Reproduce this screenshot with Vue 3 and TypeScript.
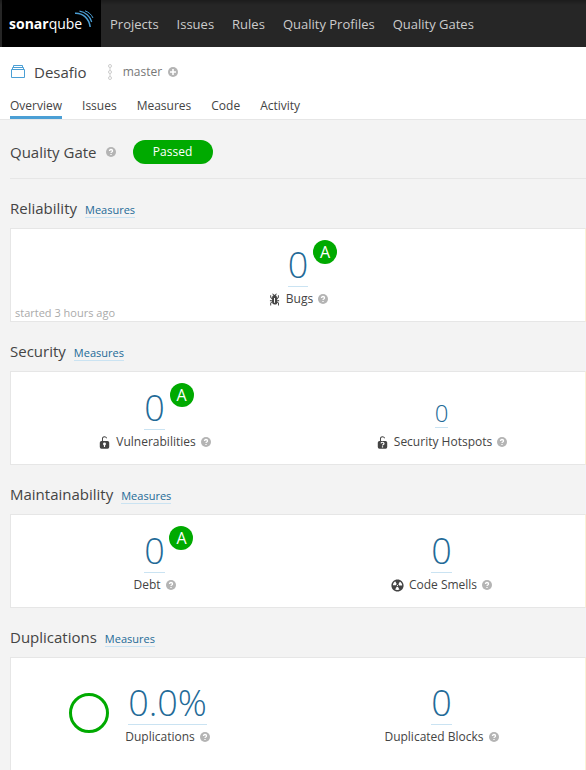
<script setup lang="ts">
type IconName = 'bug' | 'lock' | 'hotspot' | 'smell'

interface Measure {
  value: string
  label: string
  icon?: IconName
  rating?: string
  small?: boolean
  ring?: boolean
}

interface Domain {
  title: string
  note?: string
  measures: Measure[]
}

const mainNav: string[] = ['Projects', 'Issues', 'Rules', 'Quality Profiles', 'Quality Gates']
const tabs: string[] = ['Overview', 'Issues', 'Measures', 'Code', 'Activity']

const domains: Domain[] = [
  {
    title: 'Reliability',
    note: 'started 3 hours ago',
    measures: [{ value: '0', label: 'Bugs', icon: 'bug', rating: 'A' }],
  },
  {
    title: 'Security',
    measures: [
      { value: '0', label: 'Vulnerabilities', icon: 'lock', rating: 'A' },
      { value: '0', label: 'Security Hotspots', icon: 'hotspot', small: true },
    ],
  },
  {
    title: 'Maintainability',
    measures: [
      { value: '0', label: 'Debt', rating: 'A' },
      { value: '0', label: 'Code Smells', icon: 'smell' },
    ],
  },
  {
    title: 'Duplications',
    measures: [
      { value: '0.0%', label: 'Duplications', ring: true },
      { value: '0', label: 'Duplicated Blocks' },
    ],
  },
]
</script>

<template>
  <div class="page">
    <header class="topbar">
      <a class="logo" href="#" aria-label="sonarqube">
        <span class="logo-text"><b>sonar</b>qube</span>
        <svg class="waves" viewBox="0 0 20 20" aria-hidden="true">
          <path d="M1 3.2C8.500 2.800 15 8 16.200 17" stroke-width="1.500" />
          <path d="M5.500 1.200C11 1.800 16.500 6.500 17.700 12" stroke-width="1.200" />
          <path d="M11 .8C14.500 2 17.500 4.500 19 8" stroke-width="1" />
        </svg>
      </a>
      <nav class="main-nav">
        <a v-for="item in mainNav" :key="item" href="#">{{ item }}</a>
      </nav>
    </header>

    <div class="project">
      <div class="project-line">
        <svg class="project-icon" viewBox="0 0 16 16" aria-hidden="true">
          <path d="M1.500 5.500h13v8h-13zM2.500 5.500v-2h11v2M3.500 3.500v-2h9v2" />
        </svg>
        <h1>Desafio</h1>
        <svg class="branch-icon" viewBox="0 0 6 16" aria-hidden="true">
          <circle cx="3" cy="2" r="1.500" />
          <circle cx="3" cy="8" r="1.500" />
          <circle cx="3" cy="14" r="1.500" />
          <path d="M3 3.500v3M3 9.500v3" />
        </svg>
        <span class="branch">master</span>
        <button class="plus" type="button" aria-label="Add">
          <svg viewBox="0 0 10 10" aria-hidden="true">
            <circle cx="5" cy="5" r="5" fill="#b4b4b4" />
            <path d="M5 2v6M2 5h6" stroke="#fff" stroke-width="1.600" />
          </svg>
        </button>
      </div>
      <nav class="tabs">
        <a v-for="(tab, i) in tabs" :key="tab" href="#" :class="{ active: i === 0 }">{{ tab }}</a>
      </nav>
    </div>

    <main>
      <div class="gate">
        <h2>Quality Gate</h2>
        <svg class="help" viewBox="0 0 10 10" aria-hidden="true">
          <circle cx="5" cy="5" r="5" />
          <path d="M3.500 4Q3.500 2.500 5 2.500T6.500 3.900Q6.500 4.600 5.700 5Q5 5.300 5 6M5 6.900v1.200" />
        </svg>
        <span class="status">Passed</span>
      </div>

      <section v-for="domain in domains" :key="domain.title" class="domain">
        <div class="domain-head">
          <h2>{{ domain.title }}</h2>
          <a href="#">Measures</a>
        </div>
        <div class="card">
          <div
            v-for="m in domain.measures"
            :key="m.label"
            class="measure"
            :class="{ 'with-ring': m.ring }"
          >
            <span v-if="m.ring" class="ring"></span>
            <div class="measure-body">
              <div class="value-box">
                <div class="value-wrap">
                  <a class="value" :class="{ small: m.small }" href="#">{{ m.value }}</a>
                  <span v-if="m.rating" class="rating">{{ m.rating }}</span>
                </div>
              </div>
              <div class="label">
                <svg v-if="m.icon" class="metric-icon" viewBox="0 0 16 16" aria-hidden="true">
                  <path
                    v-if="m.icon === 'bug'"
                    transform="matrix(1.180 0 0 1.150 -2 -.7)"
                    d="M11 9h1.300l.5.8.8-.5-.8-1.300H11v-.3l2-2.300V3h-1v2l-1 1.200V5c-.1-.8-.7-1.500-1.400-1.900L11 1.800l-.7-.7-1.800 1.600-1.800-1.600-.7.7 1.500 1.300C6.700 3.500 6.100 4.200 6 5v1.100L5 5V3H4v2.300l2 2.300V8H4.200l-.7 1.200.8.5.4-.7H6v.3l-2 1.900V14h1v-2.400l1-1C6 12 7.100 13 8.400 13h.8c.7 0 1.400-.3 1.800-.9.3-.4.3-.9.2-1.400l.9.900V14h1v-2.800l-2-1.900V9zm-2 2H8V6h1v5z"
                  />
                  <g v-else-if="m.icon === 'lock' || m.icon === 'hotspot'">
                    <path
                      d="M11.800 6H6.100V3.900a2.100 2.100 0 0 1 2-2.500 2.220 2.220 0 0 1 1.900 1.200.48.48 0 0 0 .8.2.48.48 0 0 0 .2-.7A3.200 3.200 0 0 0 8.100.2a3.340 3.340 0 0 0-3.200 3.600V6H4.200A2.100 2.100 0 0 0 2.200 8v5.600a2.100 2.100 0 0 0 2 2.100h7.600a2.100 2.100 0 0 0 2-2.100V8a2.100 2.100 0 0 0-2-2z"
                    />
                    <path
                      v-if="m.icon === 'lock'"
                      fill="#fff"
                      d="M8.700 11.600v2H7.300v-2a1.800 1.800 0 0 1-1.100-1.700 1.800 1.800 0 0 1 3.600 0 1.800 1.800 0 0 1-1.100 1.700z"
                    />
                    <path
                      v-else
                      class="mark"
                      d="M6.200 9.100Q6.300 7.700 8 7.700T9.800 9.100Q9.800 9.900 8.900 10.400Q8 10.900 8 11.600M8 12.600v1.500"
                    />
                  </g>
                  <path
                    v-else
                    transform="matrix(1.250 0 0 1.250 -2 -2)"
                    d="M8 2C4.700 2 2 4.700 2 8s2.700 6 6 6 6-2.700 6-6-2.700-6-6-6zm-.5 5.500h.9v.9h-.9v-.9zm-3.800.2c-.1 0-.2-.1-.2-.2 0-.4.1-1.200.6-2S5.300 4.200 5.600 4c.2 0 .3 0 .3.1l1.300 2.300c0 .1 0 .2-.1.2-.1.2-.2.3-.3.5-.1.2-.2.4-.2.5 0 .1-.1.2-.2.2l-2.700-.1zM9.900 12c-.3.2-1.100.5-2 .5-.9 0-1.700-.3-2-.5-.1 0-.1-.2-.1-.3l1.300-2.300c0-.1.1-.1.2-.1.2.1.3.1.5.1s.4 0 .5-.1c.1 0 .2 0 .2.1l1.300 2.300c.2.2.2.3.1.3zm2.500-4.100L9.700 8c-.1 0-.2-.1-.2-.2 0-.2-.1-.4-.2-.5 0-.1-.2-.3-.3-.4-.1 0-.1-.1-.1-.2l1.300-2.300c.1-.1.2-.1.3-.1.3.2 1 .7 1.500 1.500s.6 1.600.6 2c0 0-.1.1-.2.1z"
                  />
                </svg>
                <span>{{ m.label }}</span>
                <svg class="help" viewBox="0 0 10 10" aria-hidden="true">
                  <circle cx="5" cy="5" r="5" />
                  <path d="M3.500 4Q3.500 2.500 5 2.500T6.500 3.900Q6.500 4.600 5.700 5Q5 5.300 5 6M5 6.900v1.200" />
                </svg>
              </div>
            </div>
          </div>
          <span v-if="domain.note" class="note">{{ domain.note }}</span>
        </div>
      </section>
    </main>
  </div>
</template>

<style>
body {
  margin: 0;
  background: #f3f3f3;
  overflow: hidden;
}
</style>

<style scoped>
.page {
  font-family: 'Open Sans', 'Noto Sans', sans-serif;
  font-size: 12px;
  line-height: 16px;
  color: #444;
}
a {
  text-decoration: none;
  color: inherit;
}
h1,
h2 {
  margin: 0;
  font-size: 15px;
  line-height: 24px;
  font-weight: 400;
}
svg {
  flex: none;
}
.topbar {
  display: flex;
  height: 47px;
  padding-left: 2px;
  background: linear-gradient(#1c1c1c, #262626 5px);
}
.logo {
  display: flex;
  width: 99px;
  box-sizing: border-box;
  padding-left: 7px;
  background: #000;
  color: #fff;
  align-items: center;
}
.logo-text {
  font-size: 14px;
}
.waves {
  width: 20px;
  height: 20px;
  align-self: flex-start;
  margin-top: 10px;
  margin-left: -8px;
  fill: none;
  stroke: #4b9fd5;
}
.main-nav {
  display: flex;
  align-items: center;
  gap: 18px;
  padding-left: 9px;
  font-size: 13px;
  color: #ccc;
}
.project {
  background: #fff;
  border-bottom: 1px solid #e6e6e6;
  padding: 13px 10px 0;
}
.project-line {
  display: flex;
  align-items: center;
  height: 24px;
}
.project-icon {
  width: 16px;
  height: 16px;
  margin-right: 8px;
  fill: none;
  stroke: #4b9fd5;
}
.branch-icon {
  width: 6px;
  height: 16px;
  margin: 0 10px 0 20px;
  fill: none;
  stroke: #cdcdcd;
}
.branch {
  color: #777;
}
.plus {
  display: flex;
  margin-left: 6px;
  padding: 0;
  border: 0;
  background: none;
}
.plus svg {
  width: 10px;
  height: 10px;
}
.tabs {
  display: flex;
  gap: 20px;
  margin-top: 10px;
}
.tabs a {
  padding: 4px 0 2px;
  border-bottom: 3px solid transparent;
}
.tabs .active {
  border-color: #4b9fd5;
}
main {
  padding-left: 10px;
}
.gate {
  display: flex;
  align-items: center;
  height: 59px;
  padding-top: 5px;
  box-sizing: border-box;
  border-bottom: 1px solid #e6e6e6;
}
.help {
  width: 10px;
  height: 10px;
  fill: #b4b4b4;
}
.help path {
  fill: none;
  stroke: #fff;
  stroke-width: 1.3;
}
.gate .help {
  margin: 0 17px 0 9px;
}
.status {
  width: 80px;
  border-radius: 12px;
  background: #0a0;
  color: #fff;
  line-height: 24px;
  text-align: center;
}
.domain-head {
  display: flex;
  align-items: baseline;
  gap: 8px;
  height: 49px;
  padding-top: 17px;
  box-sizing: border-box;
}
.domain-head a,
.value {
  color: #236a97;
  border-bottom: 1px solid #cae3f2;
}
.domain-head a {
  font-size: 11px;
  line-height: 14px;
}
.card {
  position: relative;
  display: flex;
  border: 1px solid #e6e6e6;
  border-right-color: #fbf3d5;
  background: #fff;
  min-height: 92px;
}
.measure {
  display: flex;
  flex: 1 1 0;
  min-width: 0;
  justify-content: center;
}
.with-ring {
  gap: 16px;
}
.with-ring .measure-body {
  margin-right: 30px;
}
.domain:last-child .card {
  min-height: 130px;
  padding-top: 9px;
}
.ring {
  width: 40px;
  height: 40px;
  margin-top: 26px;
  box-sizing: border-box;
  border: 3px solid #0a0;
  border-radius: 50%;
}
.measure-body {
  display: flex;
  flex-direction: column;
  align-items: center;
}
.value-box {
  display: flex;
  align-items: flex-end;
  height: 58px;
}
.value-wrap {
  position: relative;
}
.value {
  display: block;
  font-size: 36px;
  line-height: 42px;
  font-weight: 300;
}
.value.small {
  font-size: 24px;
  line-height: 28px;
  margin-bottom: 2px;
}
.rating {
  position: absolute;
  top: -4px;
  left: calc(50% + 15px);
  width: 24px;
  border-radius: 50%;
  background: #0a0;
  color: #fff;
  font-size: 16px;
  line-height: 24px;
  text-align: center;
}
.label {
  display: flex;
  align-items: center;
  gap: 5px;
  margin-top: 4px;
}
.metric-icon {
  width: 13px;
  height: 13px;
  fill: #444;
}
.mark {
  fill: none;
  stroke: #fff;
  stroke-width: 1.5;
}
.note {
  position: absolute;
  bottom: 0;
  left: 4px;
  font-size: 11px;
  color: #aaa;
}
</style>
